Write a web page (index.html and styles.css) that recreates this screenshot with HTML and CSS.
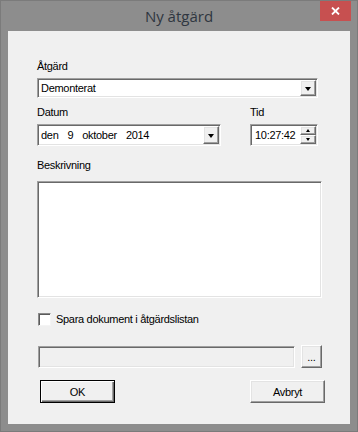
FILE: index.html
```html
<!DOCTYPE html>
<html lang="sv">
<head>
  <meta charset="UTF-8">
  <meta name="viewport" content="width=device-width,initial-scale=1.0">
  <title>Ny åtgärd</title>
  <link rel="stylesheet" href="styles.css">
</head>
<body>
  <div class="window">
    <div class="titlebar">
      <span></span>
      <div class="title">Ny åtgärd</div>
      <button class="close" aria-label="Stäng">
        <svg width="9" height="8" viewBox="0 0 9 8"><path d="M1 0.5 L8 7.5 M8 0.5 L1 7.5" stroke="#fff" stroke-width="1.8"/></svg>
      </button>
    </div>

    <div class="client">
      <div class="lbl first">Åtgärd</div>
      <div class="field combo">
        <span class="value">Demonterat</span>
        <span class="btn drop"><i class="arrow"></i></span>
      </div>

      <div class="date-row">
        <div class="col">
          <div class="lbl">Datum</div>
          <div class="field date">
            <span class="value date-parts"><span>den</span><span>9</span><span>oktober</span><span>2014</span></span>
            <span class="btn drop"><i class="arrow"></i></span>
          </div>
        </div>
        <div class="col">
          <div class="lbl">Tid</div>
          <div class="field time">
            <span class="value">10:27:42</span>
            <span class="spin">
              <span class="btn spin-btn"><i class="tri up"></i></span>
              <span class="btn spin-btn"><i class="tri down"></i></span>
            </span>
          </div>
        </div>
      </div>

      <div class="lbl desc-lbl">Beskrivning</div>
      <div class="field memo"></div>

      <label class="check-row">
        <span class="checkbox"></span>
        <span>Spara dokument i åtgärdslistan</span>
      </label>

      <div class="path-row">
        <div class="field path"></div>
        <button class="btn browse">...</button>
      </div>

      <div class="button-row">
        <button class="btn push default">OK</button>
        <button class="btn push">Avbryt</button>
      </div>
    </div>
  </div>
</body>
</html>
```

FILE: styles.css
```css
* {
  box-sizing: border-box;
}

html, body {
  margin: 0;
  background: #8d8d8d;
}

.window {
  width: 358px;
  height: 432px;
  background: #8d8d8d;
  border: 1px solid #7b7b7b;
  padding: 0 7px 7px 7px;
  display: flex;
  flex-direction: column;
  font-family: "Liberation Sans", Arial, sans-serif;
  font-size: 11px;
  letter-spacing: -0.3px;
  color: #000;
}

/* title bar */
.titlebar {
  height: 30px;
  display: grid;
  grid-template-columns: 1fr auto 1fr;
}
.title {
  font-family: "Open Sans", "Noto Sans", sans-serif;
  font-size: 15px;
  letter-spacing: 0;
  line-height: 30px;
  color: #2f3640;
}
.close {
  justify-self: end;
  align-self: start;
  width: 31px;
  height: 20px;
  margin-right: -1px;
  padding: 0;
  border: none;
  background: #c75050;
  display: flex;
  align-items: center;
  justify-content: center;
}

/* client area */
.client {
  height: 393px;
  background: #f0f0f0;
  padding-left: 29px;
  display: flex;
  flex-direction: column;
  align-items: flex-start;
}

.lbl {
  height: 13px;
  line-height: 13px;
  margin-top: 8px;
  margin-bottom: 5px;
}
.lbl.first {
  margin-top: 29px;
}
.desc-lbl {
  margin-top: 13px;
  margin-bottom: 9px;
}

/* sunken field */
.field {
  background: #fff;
  border: 1px solid;
  border-color: #a0a0a0 #fff #fff #a0a0a0;
  box-shadow: inset 1px 1px #696969, inset -1px -1px #e3e3e3;
  padding: 1px;
  display: flex;
  align-items: center;
}
.field .value {
  flex: 1;
  padding-left: 2px;
  line-height: 13px;
}

/* raised button face */
.btn {
  background: #f0f0f0;
  border: 1px solid;
  border-color: #fff #696969 #696969 #fff;
  box-shadow: inset -1px -1px #a0a0a0, inset 1px 1px #e3e3e3;
  font-family: inherit;
  font-size: 11px;
  letter-spacing: inherit;
  color: #000;
  padding: 0;
}

.drop {
  width: 16px;
  align-self: stretch;
  display: flex;
  align-items: center;
  justify-content: center;
}
.arrow {
  width: 0;
  height: 0;
  border-left: 3.5px solid transparent;
  border-right: 3.5px solid transparent;
  border-top: 4px solid #000;
  margin-top: 1px;
}

.combo {
  width: 281px;
  height: 20px;
}

.date-row {
  display: flex;
  gap: 29px;
}
.col {
  display: flex;
  flex-direction: column;
}
.date {
  width: 184px;
  height: 22px;
}
.date-parts {
  display: flex;
  gap: 9px;
}
.time {
  width: 68px;
  height: 22px;
}
.time .value {
  padding-left: 3px;
}
.spin {
  width: 16px;
  align-self: stretch;
  display: flex;
  flex-direction: column;
}
.spin-btn {
  flex: 1;
  display: flex;
  align-items: center;
  justify-content: center;
}
.tri {
  width: 0;
  height: 0;
  border-left: 2.5px solid transparent;
  border-right: 2.5px solid transparent;
}
.tri.up {
  border-bottom: 3px solid #000;
}
.tri.down {
  border-top: 3px solid #000;
}

.memo {
  width: 285px;
  height: 117px;
}

.check-row {
  margin-top: 15px;
  margin-left: 1px;
  height: 13px;
  display: flex;
  align-items: center;
  gap: 5px;
  line-height: 13px;
}
.checkbox {
  width: 13px;
  height: 13px;
  background: #fff;
  border: 1px solid;
  border-color: #8a8a8a #f4f4f4 #f4f4f4 #8a8a8a;
  box-shadow: inset 1px 1px #5a5a5a;
}

.path-row {
  margin-top: 19px;
  margin-left: 1px;
  height: 23px;
  display: flex;
  align-items: center;
  gap: 6px;
}
.path {
  width: 257px;
  height: 22px;
  background: #f0f0f0;
}
.browse {
  width: 21px;
  height: 23px;
  line-height: 18px;
}

.button-row {
  margin-top: 12px;
  margin-left: 3px;
  display: flex;
  gap: 135px;
}
.push {
  width: 75px;
  height: 23px;
}
.push.default {
  border-color: #000;
  box-shadow: inset 1px 1px #fff, inset -1px -1px #696969, inset -2px -2px #a0a0a0;
}
```
